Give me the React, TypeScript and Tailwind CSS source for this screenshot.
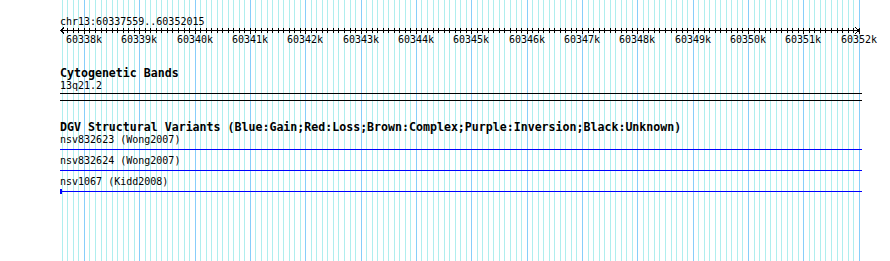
import React from "react";

const START = 60337559;
const END = 60352015;
const LEFT = 60;
const SCALE = 800 / (END - START);

// page x for a genomic position
const px = (pos: number) => Math.floor(LEFT + (pos - START) * SCALE);

const positions: number[] = [];
for (let p = 60337600; p <= 60352000; p += 100) positions.push(p);

const features = ["nsv832623 (Wong2007)", "nsv832624 (Wong2007)", "nsv1067 (Kidd2008)"];

function GridLines() {
  return (
    <svg
      className="absolute inset-0 pointer-events-none"
      width={890}
      height={261}
      shapeRendering="crispEdges"
    >
      {positions.map((p) => {
        const major = p % 1000 === 0;
        const x = px(p) + 0.5;
        return (
          <line
            key={p}
            x1={x}
            x2={x}
            y1={0}
            y2={261}
            stroke={major ? "#87cefa" : "#afeeee"}
            strokeWidth={1}
          />
        );
      })}
    </svg>
  );
}

function Ruler() {
  return (
    <svg width={830} height={18} className="block overflow-visible" shapeRendering="crispEdges">
      <line x1={0} x2={800} y1={3.5} y2={3.5} stroke="#000" />
      <polyline points="4,0.5 0.5,3.5 4,6.5" fill="none" stroke="#000" />
      <polyline points="795,0.5 799.5,3.5 795,6.5" fill="none" stroke="#000" />
      {positions.map((p) => {
        const major = p % 1000 === 0;
        const x = px(p) - LEFT + 0.5;
        return (
          <line key={p} x1={x} x2={x} y1={1} y2={major ? 7 : 6} stroke="#000" />
        );
      })}
      {positions
        .filter((p) => p % 1000 === 0)
        .map((p) => (
          <text
            key={p}
            x={px(p) - LEFT}
            y={16}
            textAnchor="middle"
            fontFamily="'DejaVu Sans Mono', monospace"
            fontSize={10}
            fill="#000"
          >
            {p / 1000}k
          </text>
        ))}
    </svg>
  );
}

export default function App() {
  return (
    <div className="relative w-[890px] h-[261px] overflow-hidden bg-white text-black font-['DejaVu_Sans_Mono',monospace]">
      <GridLines />
      <div className="relative flex flex-col pl-[60px]">
        <div className="mt-[16px] text-[10px] leading-[11px]">chr13:60337559..60352015</div>
        <Ruler />

        <div className="mt-[22px] text-[11.6px] leading-[13px] font-bold">Cytogenetic Bands</div>
        <div className="text-[10px] leading-[11px]">13q21.2</div>
        <div className="mt-[2px] w-[802px] h-[8px] border-y border-black" />

        <div className="mt-[20px] text-[11.6px] leading-[13px] font-bold">
          DGV Structural Variants (Blue:Gain;Red:Loss;Brown:Complex;Purple:Inversion;Black:Unknown)
        </div>
        {features.map((name, i) => (
          <div key={name} className={i === 0 ? "" : "mt-[5px]"}>
            <div className="text-[10px] leading-[11px]">{name}</div>
            <div className="relative mt-[4px] w-[802px] h-px bg-[#0000ff]">
              {i === 2 && <div className="absolute left-0 top-[-2px] w-[2px] h-[5px] bg-[#0000ff]" />}
            </div>
          </div>
        ))}
      </div>
    </div>
  );
}
